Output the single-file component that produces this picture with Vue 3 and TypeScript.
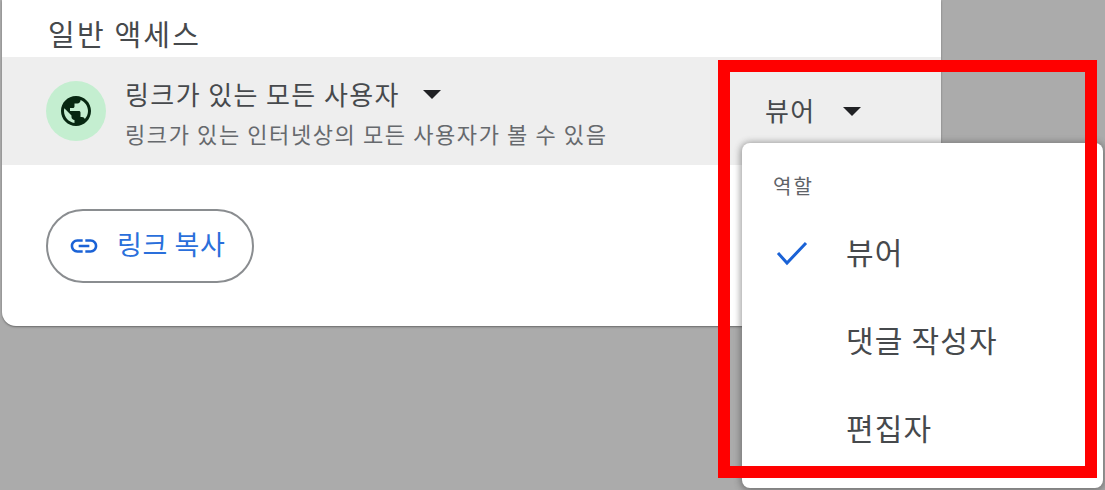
<script setup lang="ts">
const roles = [
  { label: '뷰어', checked: true },
  { label: '댓글 작성자', checked: false },
  { label: '편집자', checked: false },
]
</script>

<template>
  <div class="page">
    <section class="card">
      <h2 class="title">일반 액세스</h2>
      <div class="access-row">
        <span class="globe">
          <svg viewBox="0 0 24 24" width="36" height="36" aria-hidden="true">
            <path fill="#072711" d="M12 2C6.48 2 2 6.48 2 12s4.48 10 10 10 10-4.48 10-10S17.52 2 12 2zM4 12c0-.61.08-1.21.21-1.78L8.99 15v1c0 1.1.9 2 2 2v1.93C7.06 19.43 4 16.07 4 12zm13.89 5.4c-.26-.81-1-1.4-1.9-1.4h-1v-3c0-.55-.45-1-1-1h-6v-2h2c.55 0 1-.45 1-1V7h2c1.1 0 2-.9 2-2v-.41C17.92 5.77 20 8.65 20 12c0 2.08-.81 3.98-2.11 5.4z"/>
          </svg>
        </span>
        <div class="access-text">
          <div class="access-name">
            <span>링크가 있는 모든 사용자</span>
            <i class="caret"></i>
          </div>
          <div class="access-desc">링크가 있는 인터넷상의 모든 사용자가 볼 수 있음</div>
        </div>
        <div class="role-select">
          <span class="role-label">뷰어</span>
          <i class="caret"></i>
        </div>
      </div>
      <button class="copy" type="button">
        <svg viewBox="0 0 24 24" width="32" height="32" aria-hidden="true">
          <path fill="#1a62d6" d="M3.9 12c0-1.71 1.39-3.1 3.1-3.1h4V7H7c-2.76 0-5 2.24-5 5s2.24 5 5 5h4v-1.9H7c-1.71 0-3.1-1.39-3.1-3.1zM8 13h8v-2H8v2zm9-6h-4v1.9h4c1.71 0 3.1 1.39 3.1 3.1s-1.39 3.1-3.1 3.1h-4V17h4c2.76 0 5-2.24 5-5s-2.24-5-5-5z"/>
        </svg>
        <span class="copy-label">링크 복사</span>
      </button>
    </section>

    <div class="menu">
      <div class="menu-label">역할</div>
      <div v-for="role in roles" :key="role.label" class="menu-item">
        <span class="check">
          <svg v-if="role.checked" viewBox="0 0 34 28" width="34" height="28" aria-hidden="true">
            <path d="M3 14 L12 24 L31 4" fill="none" stroke="#1a62d6" stroke-width="3"/>
          </svg>
        </span>
        <span>{{ role.label }}</span>
      </div>
    </div>

    <div class="highlight"></div>
  </div>
</template>

<style>
html, body { margin: 0; background: #ababab; }
</style>

<style scoped>
.page {
  position: relative;
  width: 1105px;
  height: 490px;
  overflow: hidden;
  background: #ababab;
  font-family: "Noto Sans CJK KR", "Noto Sans", sans-serif;
}
.card {
  box-sizing: border-box;
  width: 939px;
  height: 326px;
  margin-left: 2px;
  background: #fff;
  border-radius: 0 0 14px 14px;
  box-shadow: 0 1px 2px rgba(60, 60, 60, 0.6);
  display: flex;
  flex-direction: column;
}
.title {
  margin: 0;
  height: 57px;
  padding: 14px 0 0 46px;
  box-sizing: border-box;
  font-size: 29px;
  letter-spacing: 2.2px;
  line-height: 38px;
  font-weight: 400;
  color: #46494c;
}
.access-row {
  height: 108px;
  background: #eeeeee;
  display: flex;
  align-items: center;
  padding-left: 44px;
}
.globe {
  width: 60px;
  height: 60px;
  border-radius: 50%;
  background: #c4eed0;
  display: flex;
  align-items: center;
  justify-content: center;
  flex: none;
}
.access-text {
  margin: 8px 0 0 19px;
  width: 640px;
  flex: none;
}
.access-name {
  display: flex;
  align-items: center;
  font-size: 26px;
  letter-spacing: 1.4px;
  line-height: 36px;
  color: #46494c;
}
.access-name .caret { margin-left: 23px; }
.access-desc {
  font-size: 22px;
  letter-spacing: 1.6px;
  line-height: 42px;
  color: #66696d;
}
.caret {
  display: inline-block;
  width: 0;
  height: 0;
  border-left: 9px solid transparent;
  border-right: 9px solid transparent;
  border-top: 9px solid #202124;
}
.role-select {
  display: flex;
  align-items: center;
  font-size: 26px;
  letter-spacing: 1.4px;
  color: #46494c;
}
.role-label { margin-top: -4px; }
.role-select .caret { margin-left: 27px; }
.copy {
  margin: 44px 0 0 44px;
  width: 208px;
  height: 74px;
  box-sizing: border-box;
  border: 2px solid #8a8d90;
  border-radius: 37px;
  background: #fff;
  display: flex;
  align-items: center;
  padding: 0 0 0 20px;
  gap: 17px;
  font-family: inherit;
  font-size: 27px;
  letter-spacing: 0.6px;
  color: #2a6fdb;
}
.copy-label { margin-top: -5px; }
.menu {
  position: absolute;
  left: 742px;
  top: 143px;
  width: 361px;
  height: 345px;
  box-sizing: border-box;
  background: #fff;
  border-radius: 8px;
  box-shadow: 0 1px 6px 2px rgba(60, 60, 60, 0.45);
  padding-top: 28px;
}
.menu-label {
  padding-left: 31px;
  font-size: 20px;
  letter-spacing: 2px;
  line-height: 30px;
  color: #5f6368;
  margin-bottom: 6px;
}
.menu-item {
  display: flex;
  align-items: center;
  height: 88px;
  font-size: 30px;
  letter-spacing: 1.2px;
  color: #46494c;
}
.check {
  width: 104px;
  flex: none;
  padding: 4px 0 0 33px;
  box-sizing: border-box;
  display: flex;
}
.highlight {
  position: absolute;
  left: 718px;
  top: 60px;
  width: 379px;
  height: 418px;
  box-sizing: border-box;
  border: 12px solid #ff0000;
}
</style>
